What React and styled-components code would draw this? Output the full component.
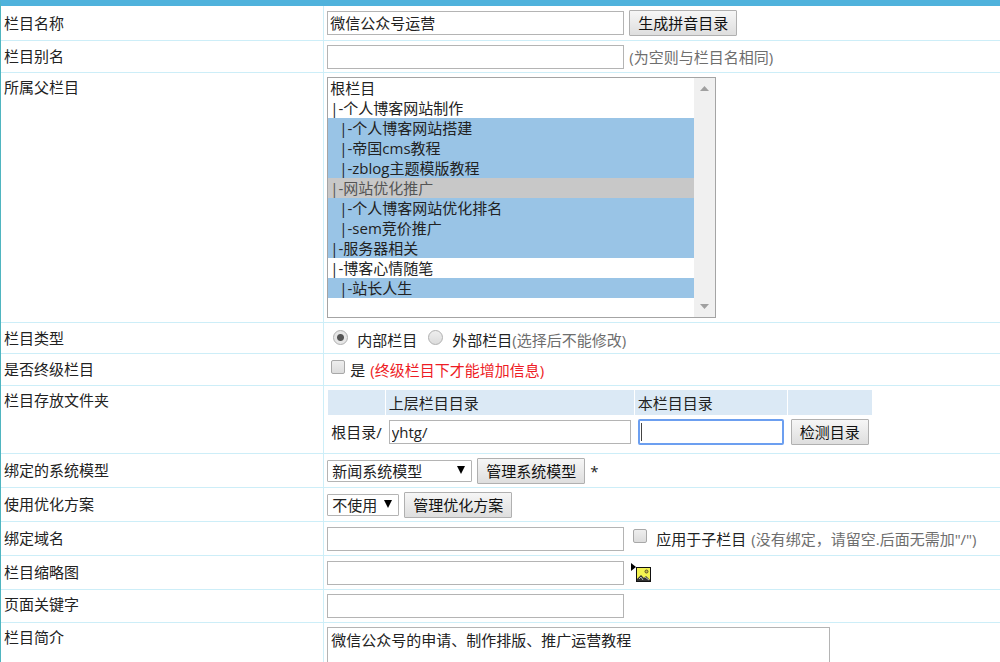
import React from 'react';
import styled, { createGlobalStyle, css } from 'styled-components';

const folders = [
	{ value: 'root', text: '根栏目' },
	{ value: 'site', text: '|-个人博客网站制作' },
	{ value: 'build', text: '|-个人博客网站搭建', level: 1, last: true },
	{ value: 'cms', text: '|-帝国cms教程', level: 1, last: true },
	{ value: 'zblog', text: '|-zblog主题模版教程', level: 1, last: true },
	{ value: 'seo', text: '|-网站优化推广' },
	{ value: 'rank', text: '|-个人博客网站优化排名', level: 1, last: true },
	{ value: 'sem', text: '|-sem竞价推广', level: 1, last: true },
	{ value: 'server', text: '|-服务器相关', last: true },
	{ value: 'mood', text: '|-博客心情随笔' },
	{ value: 'life', text: '|-站长人生', level: 1, last: true },
];

const DownArrow = () => (
	<Arrow viewBox="0 0 8 8" width="8" height="8" aria-hidden="true">
		<path d="M0 0h8L4 8z" fill="#000" />
	</Arrow>
);

const PictureIcon = () => (
	<svg width="20" height="20" viewBox="0 0 20 20" aria-hidden="true">
		<path d="M0 0l5 4-5 4z" fill="#000" />
		<rect x="5.5" y="4.5" width="14" height="14" fill="#f4f350" stroke="#111" />
		<circle cx="15.5" cy="8.5" r="1.5" fill="#c9b850" stroke="#5a5228" strokeWidth="1" />
		<path d="M6 18v-2l4-4 3 3 2-2 4 4v1z" fill="#333" />
		<path d="M8 16l2-2 2 3M14 14l4 3" fill="none" stroke="#bbb" />
	</svg>
);

const App = () => {
	return (
		<>
			<GlobalStyle />
			<Page>
				<Row $height={35}>
					<Name htmlFor="classname">栏目名称</Name>
					<Field>
						<TextBox id="classname" defaultValue="微信公众号运营" />
						<Button type="button">生成拼音目录</Button>
					</Field>
				</Row>
				<Row $height={32}>
					<Name htmlFor="alias">栏目别名</Name>
					<Field>
						<TextBox id="alias" />
						<Hint>(为空则与栏目名相同)</Hint>
					</Field>
				</Row>
				<Row $tall>
					<Name htmlFor="parent">所属父栏目</Name>
					<Field>
						<ListBox>
							<List id="parent" multiple size={12} defaultValue={['seo']}>
								{folders.map((item) => (
									<Folder key={item.value} value={item.value} $level={item.level} $last={item.last}>
										{item.text}
									</Folder>
								))}
							</List>
							<Track>
								<svg width="9" height="5" aria-hidden="true">
									<path d="M0 5L4.5 0 9 5z" fill="#a0a0a0" />
								</svg>
								<svg width="9" height="5" aria-hidden="true">
									<path d="M0 0h9L4.5 5z" fill="#a0a0a0" />
								</svg>
							</Track>
						</ListBox>
					</Field>
				</Row>
				<Row $height={31}>
					<Name as="div">栏目类型</Name>
					<RadioField>
						<Choice $wide>
							<Radio name="type" defaultChecked />
							内部栏目
						</Choice>
						<Choice $wide>
							<Radio name="type" />
							<span>
								外部栏目<Hint>(选择后不能修改)</Hint>
							</span>
						</Choice>
					</RadioField>
				</Row>
				<Row $height={32}>
					<Name as="div">是否终级栏目</Name>
					<Field>
						<Choice>
							<Check />是
						</Choice>
						<Hint $warn>(终级栏目下才能增加信息)</Hint>
					</Field>
				</Row>
				<Row $tall>
					<Name as="div">栏目存放文件夹</Name>
					<Field>
						<FolderTable>
							<thead>
								<tr>
									<th />
									<th id="upper">上层栏目目录</th>
									<th id="own">本栏目目录</th>
									<th />
								</tr>
							</thead>
							<tbody>
								<tr>
									<td>根目录/</td>
									<td>
										<TextBox $width={242} defaultValue="yhtg/" aria-labelledby="upper" />
									</td>
									<td>
										<ActiveBox $width={146} aria-labelledby="own" />
									</td>
									<td>
										<Button type="button">检测目录</Button>
									</td>
								</tr>
							</tbody>
						</FolderTable>
					</Field>
				</Row>
				<Row>
					<Name htmlFor="model">绑定的系统模型</Name>
					<Field>
						<SelectWrap $width={145}>
							<Select id="model">
								<option>新闻系统模型</option>
							</Select>
							<DownArrow />
						</SelectWrap>
						<Button type="button">管理系统模型</Button>
						<span>*</span>
					</Field>
				</Row>
				<Row>
					<Name htmlFor="plan">使用优化方案</Name>
					<Field>
						<SelectWrap $width={72}>
							<Select id="plan">
								<option>不使用</option>
							</Select>
							<DownArrow />
						</SelectWrap>
						<Button type="button">管理优化方案</Button>
					</Field>
				</Row>
				<Row>
					<Name htmlFor="domain">绑定域名</Name>
					<Field>
						<TextBox id="domain" />
						<Choice $wide>
							<Check />
							应用于子栏目
						</Choice>
						<Hint>(没有绑定，请留空.后面无需加"/")</Hint>
					</Field>
				</Row>
				<Row>
					<Name htmlFor="thumb">栏目缩略图</Name>
					<Field>
						<TextBox id="thumb" />
						<IconLink href="#thumb" aria-label="选择图片">
							<PictureIcon />
						</IconLink>
					</Field>
				</Row>
				<Row $tall>
					<Name htmlFor="keywords">页面关键字</Name>
					<Field>
						<TextBox id="keywords" />
					</Field>
				</Row>
				<Row $tall>
					<Name htmlFor="intro">栏目简介</Name>
					<Field>
						<TextArea id="intro" rows={6} defaultValue="微信公众号的申请、制作排版、推广运营教程" />
					</Field>
				</Row>
			</Page>
		</>
	);
};

const GlobalStyle = createGlobalStyle`
	* {
		box-sizing: border-box;
	}
	body {
		margin: 0;
		background: #fff;
		color: #222;
	}
	body, input, button, select, textarea {
		font-family: 'Open Sans', 'Noto Sans CJK SC', sans-serif;
		font-size: 15px;
		line-height: 20px;
	}
`;
const Page = styled.form`
	border-top: 6px solid #4fb2dc;
	border-left: 1px solid #4fb5c0;
`;
const Row = styled.div`
	display: grid;
	grid-template-columns: 10fr 21fr;
	align-items: stretch;
	min-height: ${(props) => (props.$tall ? 0 : props.$height || 34)}px;
	border-bottom: 1px solid #cdeef8;
	> * {
		display: flex;
		align-items: center;
		padding: ${(props) => (props.$tall ? '4px 3px' : '0 3px')};
		${(props) =>
			props.$tall &&
			css`
				align-items: flex-start;
			`}
	}
`;
const Name = styled.label`
	&& {
		padding-bottom: 1px;
	}
`;
const Field = styled.div`
	gap: 5px;
	min-width: 0;
	border-left: 1px solid #cdeef8;
	white-space: nowrap;
`;
const RadioField = styled(Field)`
	&& {
		padding: 4px 3px 0;
	}
`;
const TextBox = styled.input.attrs({ type: 'text' })`
	display: block;
	width: ${(props) => props.$width || 297}px;
	height: 24px;
	padding: 0 2px 1px;
	border: 1px solid #b4b4b4;
	background: #fff;
	color: #222;
	outline: none;
`;
const ActiveBox = styled(TextBox)`
	height: 26px;
	border: 2px solid #6c9ff0;
	border-radius: 2px;
	caret-color: transparent;
	background: linear-gradient(#444, #444) 1px center / 1px 18px no-repeat #fff;
`;
const TextArea = styled.textarea`
	width: 503px;
	padding: 2px 3px;
	border: 1px solid #b4b4b4;
	color: #222;
	resize: none;
	outline: none;
`;
const Button = styled.button`
	display: block;
	height: 26px;
	padding: 0 8px;
	border: 1px solid #b0b0b0;
	border-radius: 1px;
	background: linear-gradient(#f6f6f6, #dedede);
	color: #111;
	cursor: pointer;
`;
const Hint = styled.span`
	color: ${(props) => (props.$warn ? '#ee1c25' : '#6e6e6e')};
`;
const ListBox = styled.div`
	display: flex;
	width: 389px;
	height: 241px;
	border: 1px solid #a4a4a4;
`;
const List = styled.select`
	flex: 1;
	min-width: 0;
	height: 100%;
	padding: 0;
	border: none;
	border-radius: 0;
	background: #fff;
	outline: none;
	overflow: hidden;
`;
const Folder = styled.option`
	display: flex;
	align-items: center;
	height: 20px;
	min-height: 0;
	padding: 0 2px 1px ${(props) => (props.$level ? 11 : 2)}px;
	color: #222;
	background: ${(props) => (props.$last ? '#99c4e6' : '#fff')};
	&:checked {
		color: #555;
		background: linear-gradient(#c8c8c8, #c8c8c8);
	}
`;
const Track = styled.div`
	display: flex;
	flex-direction: column;
	justify-content: space-between;
	align-items: center;
	width: 21px;
	padding: 8px 0;
	background: #f0f0f0;
`;
const Choice = styled.label`
	display: flex;
	align-items: flex-start;
	gap: ${(props) => (props.$wide ? 9 : 5)}px;
	margin-left: 4px;
`;
const Radio = styled.input.attrs({ type: 'radio' })`
	appearance: none;
	width: 15px;
	height: 15px;
	margin: 0 0 0 2px;
	border: 1px solid #b0b0b0;
	border-radius: 50%;
	background: linear-gradient(#eee, #dcdcdc);
	&:checked {
		background: radial-gradient(circle, #555 3px, #e6e6e6 4px);
	}
`;
const Check = styled.input.attrs({ type: 'checkbox' })`
	appearance: none;
	width: 14px;
	height: 14px;
	margin: 0;
	border: 1px solid #a8a8a8;
	border-radius: 2px;
	background: linear-gradient(#eee, #dcdcdc);
`;
const FolderTable = styled.table`
	border-collapse: separate;
	border-spacing: 1px 0;
	th {
		height: 25px;
		padding: 0 3px;
		background: #dbe9f5;
		font-weight: 400;
		text-align: left;
	}
	td {
		padding: 4px 3px;
	}
`;
const SelectWrap = styled.div`
	position: relative;
	width: ${(props) => props.$width}px;
`;
const Select = styled.select`
	display: block;
	appearance: none;
	width: 100%;
	height: 22px;
	padding: 0 4px;
	border: 1px solid #b4b4b4;
	border-radius: 1px;
	background: #fff;
	color: #222;
`;
const Arrow = styled.svg`
	position: absolute;
	top: 6px;
	right: 7px;
	pointer-events: none;
`;
const IconLink = styled.a`
	display: flex;
	margin-left: 2px;
`;
export default App;
